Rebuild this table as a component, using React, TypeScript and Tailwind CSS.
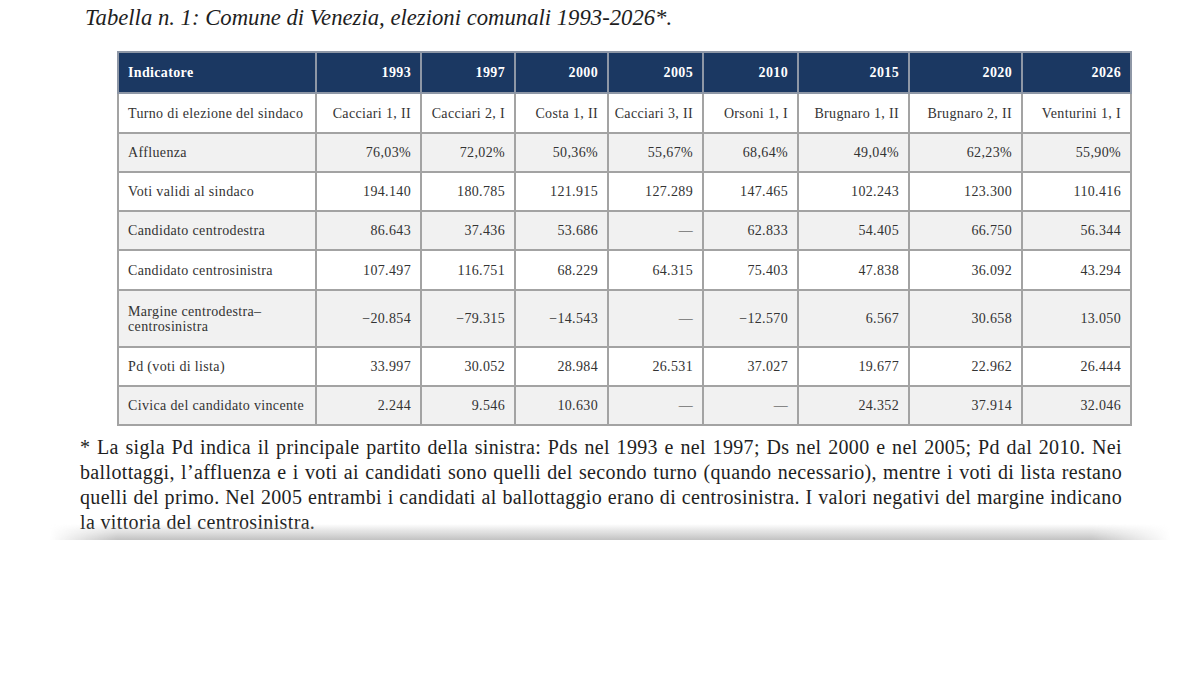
import React from "react";

const cols = ["1993", "1997", "2000", "2005", "2010", "2015", "2020", "2026"];
const widths = [198, 105, 94, 93, 95, 95, 111, 113, 109];

type Row = { label: React.ReactNode; values: string[] };

const rows: Row[] = [
  {
    label: "Turno di elezione del sindaco",
    values: ["Cacciari 1, II", "Cacciari 2, I", "Costa 1, II", "Cacciari 3, II", "Orsoni 1, I", "Brugnaro 1, II", "Brugnaro 2, II", "Venturini 1, I"],
  },
  { label: "Affluenza", values: ["76,03%", "72,02%", "50,36%", "55,67%", "68,64%", "49,04%", "62,23%", "55,90%"] },
  { label: "Voti validi al sindaco", values: ["194.140", "180.785", "121.915", "127.289", "147.465", "102.243", "123.300", "110.416"] },
  { label: "Candidato centrodestra", values: ["86.643", "37.436", "53.686", "—", "62.833", "54.405", "66.750", "56.344"] },
  { label: "Candidato centrosinistra", values: ["107.497", "116.751", "68.229", "64.315", "75.403", "47.838", "36.092", "43.294"] },
  {
    label: (
      <>
        Margine centrodestra–
        <br />
        centrosinistra
      </>
    ),
    values: ["−20.854", "−79.315", "−14.543", "—", "−12.570", "6.567", "30.658", "13.050"],
  },
  { label: "Pd (voti di lista)", values: ["33.997", "30.052", "28.984", "26.531", "37.027", "19.677", "22.962", "26.444"] },
  { label: "Civica del candidato vincente", values: ["2.244", "9.546", "10.630", "—", "—", "24.352", "37.914", "32.046"] },
];

const heights = [40, 39, 39, 39, 40, 57, 39, 39];

export default function App() {
  return (
    <div className="relative w-[1200px] h-[675px] bg-white overflow-hidden font-['Liberation_Serif',serif] text-[#2a2a2a]">
      <div className="pl-[85px] pt-[3px] h-[50px] text-[22.7px] italic leading-[30px] text-[#1e1e1e]">
        Tabella n. 1: Comune di Venezia, elezioni comunali 1993-2026*.
      </div>
      <div className="pl-[117px] pt-[1px]">
        <table className="border-collapse table-fixed text-[14px] leading-[15px] tracking-[0.35px] text-[#333]">
          <colgroup>
            {widths.map((w, i) => (
              <col key={i} style={{ width: w }} />
            ))}
          </colgroup>
          <thead>
            <tr className="h-[41px] bg-[#1b3862] text-white font-bold">
              <th className="border-2 border-[#8e97a6] text-left pl-[9px] font-bold">Indicatore</th>
              {cols.map((c) => (
                <th key={c} className="border-2 border-[#8e97a6] text-right pr-[9px] font-bold">
                  {c}
                </th>
              ))}
            </tr>
          </thead>
          <tbody>
            {rows.map((r, i) => (
              <tr key={i} className={i % 2 === 1 ? "bg-[#f1f1f1]" : "bg-white"} style={{ height: heights[i] }}>
                <td className="border-2 border-[#a3a3a3] text-left pl-[9px] whitespace-nowrap">{r.label}</td>
                {r.values.map((v, j) => (
                  <td key={j} className="border-2 border-[#a3a3a3] text-right pr-[9px] whitespace-nowrap">
                    {v}
                  </td>
                ))}
              </tr>
            ))}
          </tbody>
        </table>
      </div>
      <div className="ml-[80px] mt-[9px] w-[1042px] text-[20px] leading-[25px] tracking-[0.35px] text-[#1e1e1e]">
        <div className="text-justify [text-align-last:justify] whitespace-nowrap">
          * La sigla Pd indica il principale partito della sinistra: Pds nel 1993 e nel 1997; Ds nel 2000 e nel 2005; Pd dal 2010. Nei
        </div>
        <div className="text-justify [text-align-last:justify]">
          ballottaggi, l’affluenza e i voti ai candidati sono quelli del secondo turno (quando necessario), mentre i voti di lista restano
        </div>
        <div className="text-justify [text-align-last:justify]">
          quelli del primo. Nel 2005 entrambi i candidati al ballottaggio erano di centrosinistra. I valori negativi del margine indicano
        </div>
        <div>la vittoria del centrosinistra.</div>
      </div>
      <div className="absolute left-[50px] top-[524px] w-[1120px] h-[16px] bg-gradient-to-b from-transparent to-[#c2c2c2] [mask-image:linear-gradient(to_right,transparent,black_6%,black_93%,transparent)]" />
    </div>
  );
}
